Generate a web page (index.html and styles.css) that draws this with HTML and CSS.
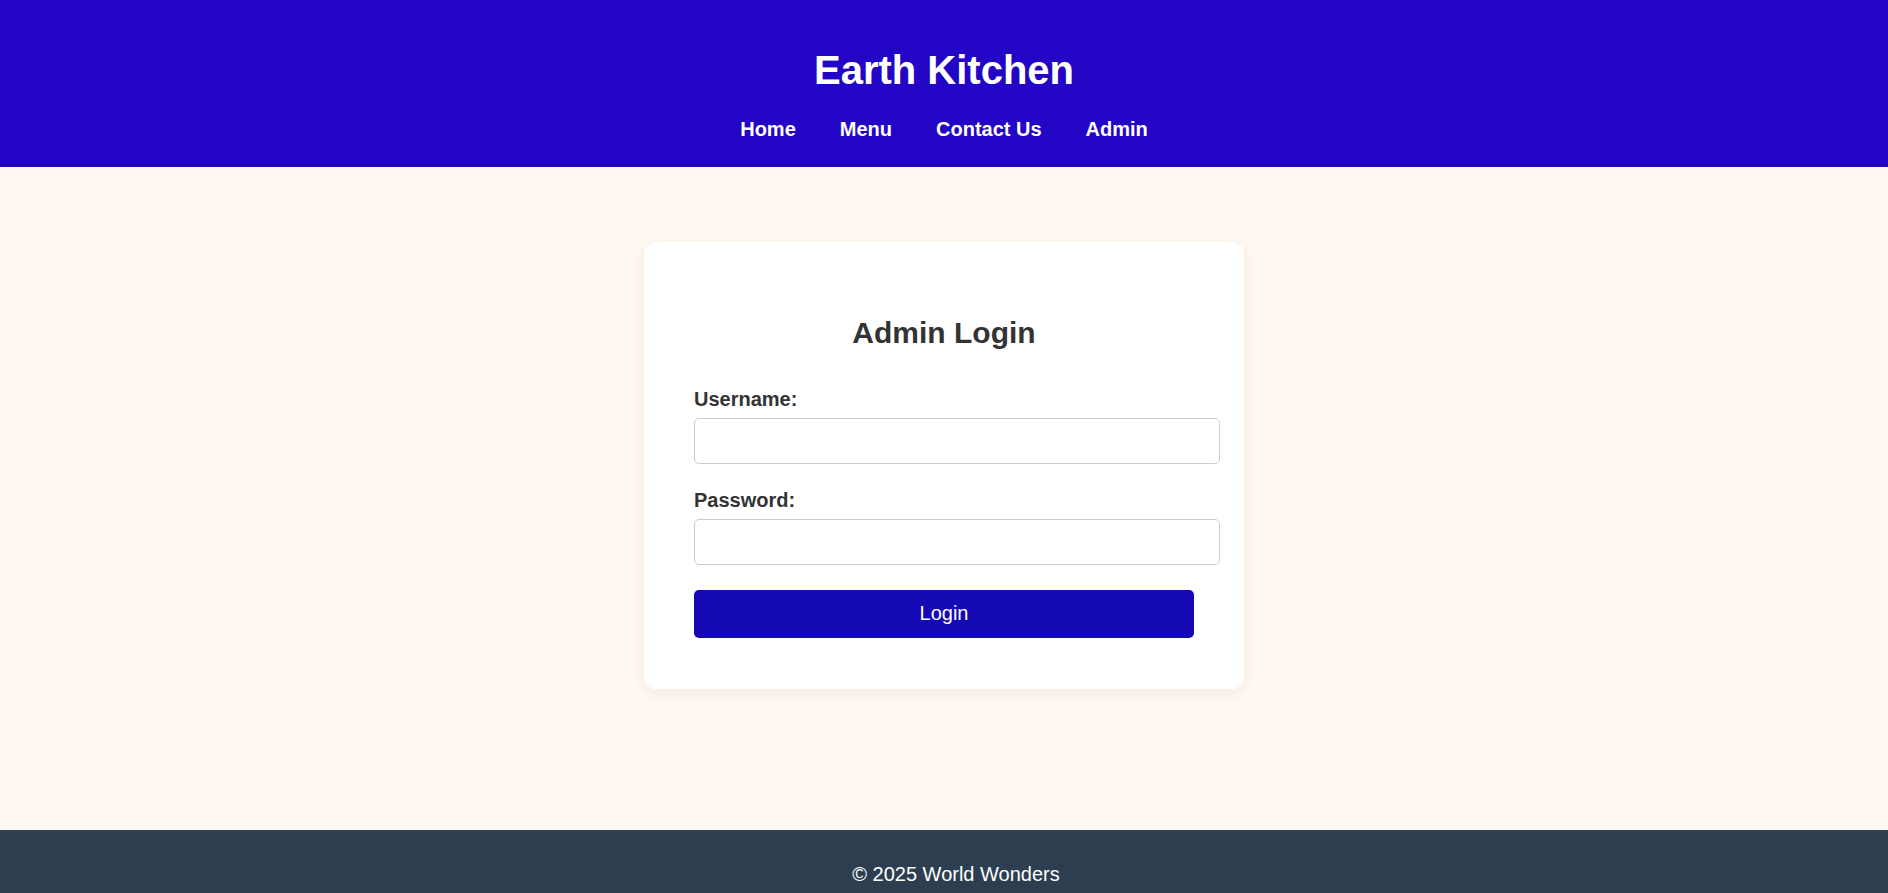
FILE: index.html
```html
<!DOCTYPE html>
<html lang="en">
<head>
<meta charset="utf-8">
<title>Admin Login - Earth Kitchen</title>
<link rel="stylesheet" href="styles.css">
</head>
<body>
<header class="site-header">
  <h1 class="site-title">Earth Kitchen</h1>
  <nav class="site-nav">
    <a href="#">Home</a>
    <a href="#">Menu</a>
    <a href="#">Contact Us</a>
    <a href="#">Admin</a>
  </nav>
</header>
<main class="main">
  <div class="login-card">
    <h2 class="login-title">Admin Login</h2>
    <form class="login-form">
      <div class="form-group">
        <label for="username">Username:</label>
        <input type="text" id="username" name="username">
      </div>
      <div class="form-group">
        <label for="password">Password:</label>
        <input type="password" id="password" name="password">
      </div>
      <button type="submit" class="login-btn">Login</button>
    </form>
  </div>
</main>
<footer class="site-footer">
  <p>&copy; 2025 World Wonders</p>
</footer>
</body>
</html>
```
FILE: styles.css
```css
html, body {
  margin: 0;
  padding: 0;
}
body {
  font-family: "Liberation Sans", Arial, sans-serif;
  font-size: 20px;
  color: #333;
  background: #fff8f0;
}
.site-header {
  background: #2306c5;
  color: #fff;
  text-align: center;
  padding: 20px 0 26px;
}
.site-title {
  margin: 27px 0 25px;
  font-size: 40px;
  font-weight: bold;
  line-height: 46px;
}
.site-nav {
  display: flex;
  justify-content: center;
  gap: 44px;
  line-height: 23px;
  height: 23px;
}
.site-nav a {
  color: #fff;
  text-decoration: none;
  font-weight: bold;
  font-size: 20px;
}
.main {
  padding: 75px 0 141px;
}
.login-card {
  width: 500px;
  margin: 0 auto;
  background: #fff;
  padding: 50px 50px 51px;
  border-radius: 12px;
  box-shadow: 0 4px 14px rgba(0, 0, 0, 0.06);
}
.login-title {
  text-align: center;
  font-size: 30px;
  font-weight: bold;
  margin: 24px 0 37px;
  line-height: 34.5px;
}
.form-group {
  margin-bottom: 25px;
}
.form-group label {
  display: block;
  font-weight: bold;
  line-height: 23px;
  margin-bottom: 7px;
}
.form-group input {
  display: block;
  width: 100%;
  padding: 12px;
  border: 1px solid #ccc;
  border-radius: 5px;
  font-family: inherit;
  font-size: 18px;
  line-height: 20.4px;
  margin: 0;
  background: #fff;
}
.login-btn {
  display: block;
  width: 100%;
  padding: 12px;
  border: none;
  border-radius: 5px;
  background: #1508b5;
  color: #fff;
  font-family: inherit;
  font-size: 20px;
  line-height: 23.6px;
  cursor: pointer;
}
.site-footer {
  background: #2c3e50;
  color: #fff;
  text-align: center;
  padding: 33px 0 20px;
}
.site-footer p {
  margin: 0;
  padding-left: 24px;
  line-height: 23px;
}
```
